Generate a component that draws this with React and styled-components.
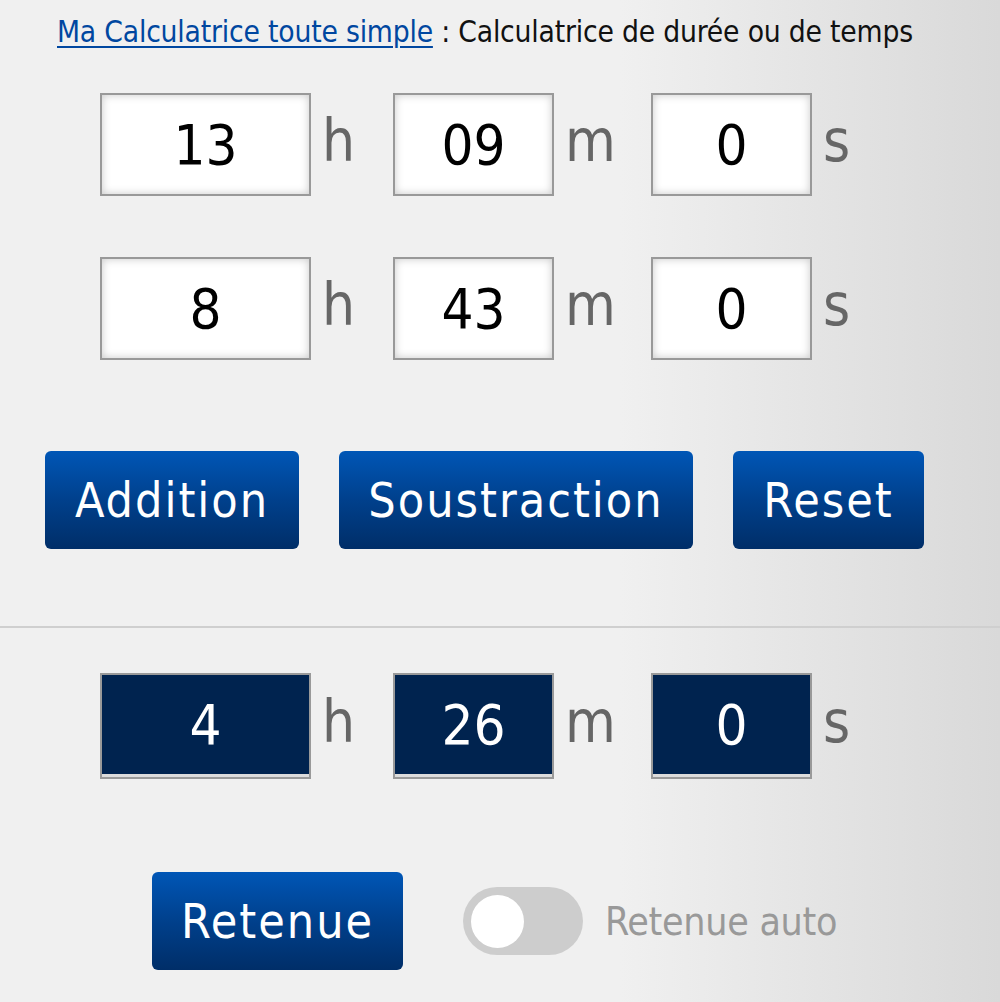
import React from "react";
import styled, { createGlobalStyle } from "styled-components";

const FONT = `"Liberation Sans Narrow", "DejaVu Sans Condensed", "DejaVu Sans", sans-serif`;

const Global = createGlobalStyle`
  html, body { margin: 0; padding: 0; }
  body {
    width: 1000px;
    min-height: 1002px;
    background: linear-gradient(to right, #f0f0f0 0%, #f0f0f0 62%, #d9d9d9 100%);
    font-family: ${FONT};
  }
`;

const Page = styled.div`
  width: 1000px;
  height: 1002px;
  overflow: hidden;
  display: flex;
  flex-direction: column;
`;

const Title = styled.h1`
  margin: 0;
  padding: 14px 0 0 57px;
  height: 55px;
  box-sizing: border-box;
  font-size: 29.7px;
  font-weight: 400;
  letter-spacing: -0.2px;
  line-height: 36px;
  color: #111;
  white-space: nowrap;
`;

const TitleLink = styled.a`
  color: #0047a0;
  text-decoration: underline;
  text-decoration-thickness: 2px;
  text-underline-offset: 4px;
`;

const TimeRow = styled.div`
  display: grid;
  grid-template-columns: 211px 82px 161px 97px 161px auto;
  align-items: center;
  margin: ${(p) => p.$mt}px 0 0 100px;
`;

const Field = styled.div`
  height: ${(p) => (p.$result ? 106 : 103)}px;
  box-sizing: border-box;
  border: 2px solid #999;
  display: flex;
  align-items: center;
  justify-content: center;
  font-size: 56px;
  font-weight: 500;
  background: ${(p) => (p.$result ? "#00234f" : "#fff")};
  color: ${(p) => (p.$result ? "#fff" : "#000")};
  box-shadow: ${(p) =>
    p.$result
      ? "inset 0 -3px 0 #dcdcdc"
      : "inset 0 0 8px rgba(0,0,0,0.22)"};
  padding-bottom: ${(p) => (p.$result ? "3px" : "0")};
`;

const Unit = styled.span`
  padding-left: 11px;
  font-size: 58px;
  line-height: 1;
  color: #666;
  align-self: center;
  margin-top: -8px;
`;

const ButtonRow = styled.div`
  display: flex;
  gap: 40px;
  margin: 91px 0 0 45px;
`;

const Button = styled.button`
  width: ${(p) => p.$w}px;
  height: 98px;
  border: none;
  border-radius: 6px;
  background: linear-gradient(to bottom, #0056b6 0%, #00408c 50%, #002e68 100%);
  color: #fff;
  font-family: ${FONT};
  font-size: 48px;
  font-weight: 500;
  letter-spacing: 2px;
  padding: 0;
  cursor: pointer;
`;

const Divider = styled.hr`
  margin: 77px 0 0 0;
  border: none;
  height: 2px;
  background: #cfcfcf;
`;

const FooterRow = styled.div`
  display: flex;
  align-items: center;
  margin: 93px 0 0 152px;
`;

const Switch = styled.div`
  margin-left: 60px;
  width: 120px;
  height: 68px;
  border-radius: 34px;
  background: #cdcdcd;
  display: flex;
  align-items: center;
  padding-left: 8px;
  box-sizing: border-box;
`;

const Knob = styled.div`
  width: 53px;
  height: 53px;
  border-radius: 50%;
  background: #fff;
`;

const SwitchLabel = styled.span`
  margin-left: 22px;
  font-size: 39px;
  letter-spacing: -0.3px;
  color: #999;
`;

function TimeLine({ mt, values, result }) {
  return (
    <TimeRow $mt={mt}>
      <Field $result={result}>{values[0]}</Field>
      <Unit>h</Unit>
      <Field $result={result}>{values[1]}</Field>
      <Unit>m</Unit>
      <Field $result={result}>{values[2]}</Field>
      <Unit>s</Unit>
    </TimeRow>
  );
}

export default function App() {
  return (
    <Page>
      <Global />
      <Title>
        <TitleLink href="#">Ma Calculatrice toute simple</TitleLink> : Calculatrice de durée ou de temps
      </Title>
      <TimeLine mt={38} values={["13", "09", "0"]} />
      <TimeLine mt={61} values={["8", "43", "0"]} />
      <ButtonRow>
        <Button $w={254}>Addition</Button>
        <Button $w={354}>Soustraction</Button>
        <Button $w={191}>Reset</Button>
      </ButtonRow>
      <Divider />
      <TimeLine mt={45} values={["4", "26", "0"]} result />
      <FooterRow>
        <Button $w={251}>Retenue</Button>
        <Switch>
          <Knob />
        </Switch>
        <SwitchLabel>Retenue auto</SwitchLabel>
      </FooterRow>
    </Page>
  );
}
